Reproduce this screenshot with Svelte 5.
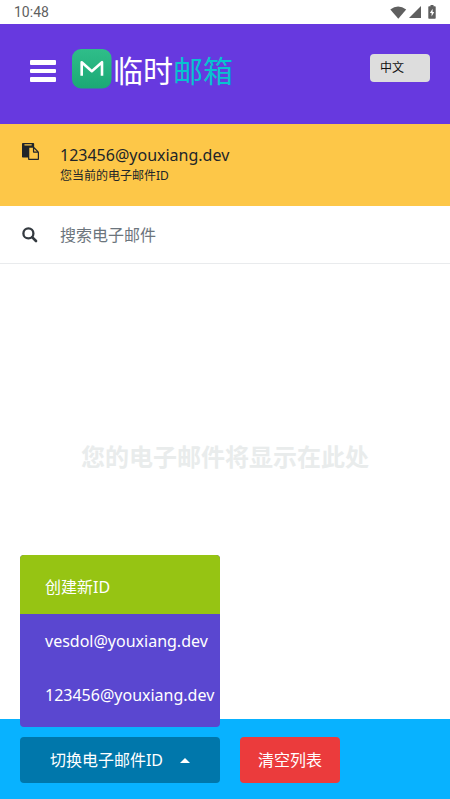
<script lang="ts">
	let language = '中文';
	let currentId = '123456@youxiang.dev';
	let ids: string[] = ['vesdol@youxiang.dev', '123456@youxiang.dev'];
	let menuOpen = true;

	function selectId(id: string) {
		currentId = id;
		menuOpen = false;
	}
</script>

<div class="screen">
	<div class="status-bar">
		<span class="clock">10:48</span>
		<div class="status-icons">
			<svg width="17" height="13" viewBox="0 0 17 13">
				<path d="M0.3 3.4Q8 -2.6 16.2 3.4L8.3 12.8Z" fill="#5f5f5f" />
			</svg>
			<svg width="12" height="12" viewBox="0 0 12 12">
				<path d="M12 0V12H0Z" fill="#5f5f5f" />
			</svg>
			<svg width="8" height="14" viewBox="0 0 8 14">
				<path d="M2.5 0H5.5V1.3H7Q7.7 1.3 7.7 2V13Q7.7 13.7 7 13.7H1Q0.3 13.7 0.3 13V2Q0.3 1.3 1 1.3H2.5Z" fill="#5f5f5f" />
				<path d="M4.6 3.8L1.9 8.1H3.6V11.4L6.2 6.9H4.6Z" fill="#fff" />
			</svg>
		</div>
	</div>

	<header class="header">
		<button class="menu-toggle" aria-label="Menu">
			<span></span>
			<span></span>
			<span></span>
		</button>
		<div class="logo">
			<svg width="40" height="40" viewBox="0 0 40 40">
				<defs>
					<linearGradient id="logo-fill" x1="0" y1="0" x2="0" y2="1">
						<stop offset="0" stop-color="#2fbd89" />
						<stop offset="1" stop-color="#1ba975" />
					</linearGradient>
				</defs>
				<rect width="39.5" height="39.5" rx="9" fill="url(#logo-fill)" />
				<path d="M9.7 26.8V13.2L19.8 22.2L30 13.2V26.8" fill="none" stroke="#fff" stroke-width="2.6" stroke-linejoin="round" />
			</svg>
			<div class="logo-text">临时<span>邮箱</span></div>
		</div>
		<div class="language">{language}</div>
	</header>

	<section class="current">
		<svg class="copy-icon" width="17" height="17" viewBox="0 0 1792 1792">
			<path fill="#212529" d="M768 1664h896v-640h-416q-40 0-68-28t-28-68v-416h-384v1152zm256-1440v-64q0-13-9.500-22.500t-22.500-9.500h-704q-13 0-22.500 9.500t-9.500 22.500v64q0 13 9.500 22.500t22.500 9.500h704q13 0 22.500-9.500t9.500-22.500zm256 672h299l-299-299v299zm512 128v672q0 40-28 68t-68 28h-960q-40 0-68-28t-28-68v-160h-544q-40 0-68-28t-28-68v-1344q0-40 28-68t68-28h1088q40 0 68 28t28 68v328q21 13 36 28l408 408q28 28 48 76t20 88z" />
		</svg>
		<div>
			<div class="address">{currentId}</div>
			<div class="caption">您当前的电子邮件ID</div>
		</div>
	</section>

	<section class="search">
		<svg width="16" height="16" viewBox="0 0 16 16" fill="none" stroke="#343a40">
			<circle cx="6.4" cy="6.4" r="5" stroke-width="2.3" />
			<path d="M10.100 10.100L14 14" stroke-width="2.7" stroke-linecap="round" />
		</svg>
		<span>搜索电子邮件</span>
	</section>

	<main class="inbox">
		<p>您的电子邮件将显示在此处</p>
	</main>

	<footer class="actions">
		<div class="switcher">
			<button class="switch" on:click={() => (menuOpen = !menuOpen)}>
				切换电子邮件ID
				<svg width="10" height="5" viewBox="0 0 10 5"><path d="M0 5L5 0L10 5Z" fill="#fff" /></svg>
			</button>
			{#if menuOpen}
				<div class="menu">
					<button class="create">创建新ID</button>
					{#each ids as id (id)}
						<button class="item" on:click={() => selectId(id)}>{id}</button>
					{/each}
				</div>
			{/if}
		</div>
		<button class="clear">清空列表</button>
	</footer>
</div>

<style>
	:global(body) {
		margin: 0;
		background: #fff;
	}

	.screen {
		display: flex;
		flex-direction: column;
		height: 799px;
		overflow: hidden;
		background: #fff;
		color: #212529;
		font-family: 'Noto Sans', 'Noto Sans CJK SC', sans-serif;
		font-size: 16px;
		line-height: 24px;
	}

	button {
		margin: 0;
		padding: 0;
		border: none;
		color: #fff;
		font: inherit;
		cursor: pointer;
	}

	svg {
		display: block;
		flex: none;
	}

	.status-bar {
		display: flex;
		justify-content: space-between;
		box-sizing: border-box;
		height: 24px;
		padding: 0 14px;
	}

	.clock {
		color: #5f5f5f;
		font-family: Roboto, sans-serif;
		font-size: 14px;
		line-height: 25px;
	}

	.status-icons {
		display: flex;
		align-items: center;
		gap: 2px;
	}

	.status-icons svg:last-child {
		margin-left: 5px;
	}

	.header {
		display: flex;
		align-items: flex-start;
		box-sizing: border-box;
		height: 100px;
		padding: 25px 20px 0 30px;
		background: #6739df;
	}

	.menu-toggle {
		display: flex;
		flex-direction: column;
		gap: 4px;
		margin-top: 11px;
		background: none;
	}

	.menu-toggle span {
		width: 26px;
		height: 4.500px;
		border-radius: 1px;
		background: #fff;
	}

	.logo {
		display: flex;
		margin-left: 16px;
	}

	.logo-text {
		margin-left: 1px;
		color: #fff;
		font-family: 'Noto Sans CJK SC', sans-serif;
		font-size: 30px;
		line-height: 40px;
	}

	.logo-text span {
		color: #08c3cf;
	}

	.language {
		box-sizing: border-box;
		width: 60px;
		height: 28px;
		margin: 5px 0 0 auto;
		padding-left: 10px;
		border-radius: 4px;
		background: #ddd;
		color: #111;
		font-size: 12px;
		line-height: 27px;
	}

	.current {
		display: flex;
		box-sizing: border-box;
		height: 82px;
		padding: 19px 22px 0;
		background: #fdc748;
	}

	.copy-icon {
		margin-right: 21px;
	}

	.caption {
		font-size: 12px;
		line-height: 18px;
	}

	.search {
		display: flex;
		align-items: center;
		gap: 22px;
		box-sizing: border-box;
		height: 58px;
		padding: 0 22px;
		border-bottom: 1px solid #e9ebed;
		color: #6c757d;
	}

	.inbox {
		display: flex;
		flex: 1;
		align-items: center;
		justify-content: center;
		padding-bottom: 70px;
	}

	.inbox p {
		margin: 0;
		color: #e9ecec;
		font-size: 24px;
		font-weight: 700;
		line-height: 36px;
	}

	.actions {
		display: flex;
		gap: 20px;
		box-sizing: border-box;
		height: 80px;
		padding: 18px 20px;
		background: #08b2ff;
	}

	.switcher {
		position: relative;
	}

	.switch {
		display: flex;
		align-items: center;
		justify-content: center;
		gap: 17px;
		width: 200px;
		height: 46px;
		border-radius: 4px;
		background: #0077ab;
	}

	.clear {
		width: 100px;
		height: 46px;
		border-radius: 4px;
		background: #eb3b3c;
	}

	.menu {
		position: absolute;
		bottom: 54px;
		left: 0;
		width: 200px;
		height: 172px;
		border-radius: 4px;
		overflow: hidden;
		background: #5a47d0;
	}

	.menu button {
		display: block;
		width: 100%;
		height: 54px;
		padding-left: 25px;
		background: none;
		text-align: left;
		white-space: nowrap;
	}

	.menu .create {
		height: 59px;
		padding-top: 5px;
		background: #96c413;
	}
</style>
